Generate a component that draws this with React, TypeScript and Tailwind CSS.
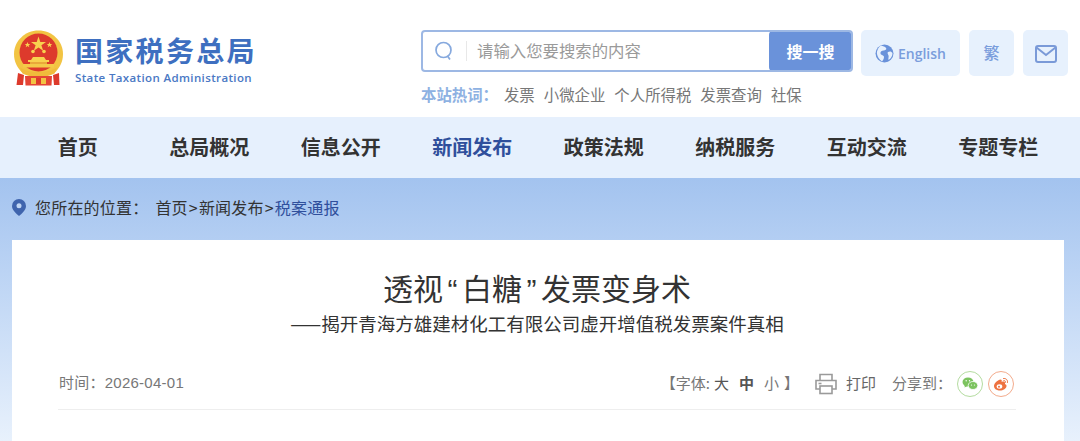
const CJK = "font-['Noto_Sans_CJK_SC','Noto_Sans',sans-serif]";
const LATIN = "font-['Liberation_Sans','Noto_Sans_CJK_SC',sans-serif]";

const HOT_WORDS = ["发票", "小微企业", "个人所得税", "发票查询", "社保"];
const NAV = ["首页", "总局概况", "信息公开", "新闻发布", "政策法规", "纳税服务", "互动交流", "专题专栏"];

function Emblem() {
  return (
    <svg width="51" height="56" viewBox="0 0 51 56" className="shrink-0">
      <path d="M25.500 0.500C39 0.500 50 11 50 24c0 8-3.500 14-8 18.500H9C4.500 38 1 32 1 24 1 11 12 0.500 25.500 0.500z" fill="#f2c443" />
      <circle cx="25.500" cy="22.500" r="19" fill="#dd3a2c" />
      <polygon points="25.500,6.500 27.300,12 33,12 28.400,15.300 30.200,20.800 25.500,17.500 20.800,20.800 22.600,15.300 18,12 23.700,12" fill="#f8d24f" />
      <polygon points="14.500,12 15.300,14 17.300,14 15.700,15.300 16.300,17.300 14.500,16.100 12.700,17.300 13.300,15.300 11.700,14 13.700,14" fill="#f8d24f" />
      <polygon points="36.500,12 37.300,14 39.300,14 37.700,15.300 38.300,17.300 36.500,16.100 34.700,17.300 35.300,15.300 33.700,14 35.700,14" fill="#f8d24f" />
      <circle cx="20" cy="21.500" r="1.800" fill="#f8d24f" />
      <circle cx="31" cy="21.500" r="1.800" fill="#f8d24f" />
      <path d="M20 27h11l2 3h-15z" fill="#f8d24f" />
      <path d="M15 30h21v2H15z" fill="#f8d24f" />
      <path d="M10 34h31v3.500H10z" fill="#f4ca49" />
      <path d="M17 32h17v2H17z" fill="#e9a93a" />
      <path d="M7 37.500c5 3 11 4.500 18.500 4.500S39 40.500 44 37.500l-2.500 6c-4.500 2.500-10 3.500-16 3.500s-11.500-1-16-3.500z" fill="#f0bb3b" />
      <path d="M5 43l6 2-1 10H3.500zM46 43l-6 2 1 10h5.500z" fill="#dd3a2c" />
      <path d="M12 46h27l-.5 9.500h-26z" fill="#e54535" />
      <path d="M18 48h15v6H18z" fill="#f2c443" />
      <path d="M23 48h5v6h-5z" fill="#dd3a2c" />
    </svg>
  );
}

function GlobeIcon() {
  return (
    <svg width="19" height="19" viewBox="0 0 19 19" className="shrink-0">
      <circle cx="9.500" cy="9.500" r="9" fill="#6a92da" />
      <path d="M6 1.500c2 1 4 1 5 2.500s-1 2.500-2.500 2.500S5 7.500 5.500 9.500 9 11 9 13s-1 3-2 4.500C4 15 2.500 13 2 10S3.500 3 6 1.500zM13 8c2-1 3.500-.5 4.500 1 0 3-1.500 5.500-4 7-.5-2 .5-3 0-4.500S12 9 13 8z" fill="#e8f1fd" />
    </svg>
  );
}

function MailIcon() {
  return (
    <svg width="22" height="18" viewBox="0 0 22 18" fill="none" stroke="#7a9ad8" strokeWidth="2" className="shrink-0">
      <rect x="1" y="1" width="20" height="16" rx="2" />
      <path d="M1.500 2.500 11 10l9.500-7.500" />
    </svg>
  );
}

function PrintIcon() {
  return (
    <svg width="22" height="22" viewBox="0 0 22 22" fill="none" stroke="#9a9a9a" strokeWidth="1.600" className="shrink-0">
      <path d="M5 7V1.500h12V7" />
      <path d="M5 16H1V7.500h20V16h-4" />
      <rect x="5" y="13" width="12" height="7.500" />
      <path d="M3.500 10.500h3" />
    </svg>
  );
}

function WechatIcon() {
  return (
    <svg width="16" height="14" viewBox="0 0 16 14">
      <ellipse cx="6" cy="5" rx="5.500" ry="4.500" fill="#7cc35f" />
      <path d="M3 8 2.500 10.500 5.500 9z" fill="#7cc35f" />
      <ellipse cx="11" cy="8.500" rx="4.800" ry="4" fill="#7cc35f" stroke="#fff" strokeWidth="0.800" />
      <circle cx="4.200" cy="3.800" r="0.700" fill="#fff" />
      <circle cx="7.500" cy="3.800" r="0.700" fill="#fff" />
      <circle cx="9.500" cy="8" r="0.600" fill="#fff" />
      <circle cx="12.500" cy="8" r="0.600" fill="#fff" />
    </svg>
  );
}

function WeiboIcon() {
  return (
    <svg width="16" height="14" viewBox="0 0 16 14">
      <path d="M1 9c0-3 4-6 6.500-6.500 1.500 0 1.500 1.500 1 2.500 2-.7 3.500-.5 3.500 1 0 .5 0 1 0 1 1 .5 1.500 1 1.500 2 0 2.500-3.500 4.500-6.500 4.500S1 12 1 9z" fill="#ee7240" />
      <ellipse cx="6.500" cy="9.500" rx="2.800" ry="2.200" fill="#fff" />
      <circle cx="6" cy="9.700" r="1" fill="#ee7240" />
      <path d="M10.500 1.500c2.500-.5 4.500 1.500 4 4M10.800 3.500c1-.2 2 .7 1.800 1.800" fill="none" stroke="#ee7240" strokeWidth="1" strokeLinecap="round" />
    </svg>
  );
}

function Header() {
  return (
    <header className="flex h-[117px] bg-white pl-[13px] pr-3">
      <div className="flex w-[408px] shrink-0 items-start pt-[30px]">
        <Emblem />
        <div className="ml-[11px]">
          <div className="text-[28px] font-bold leading-[40px] tracking-[2.300px] whitespace-nowrap text-[#3e6fc0]">国家税务总局</div>
          <div className="font-['Open_Sans',sans-serif] text-[11.500px] font-semibold leading-[16px] tracking-[0.370px] whitespace-nowrap text-[#4a78c4]">State Taxation Administration</div>
        </div>
      </div>
      <div className="pt-[30px]">
        <div className="flex h-[42px] w-[432px] overflow-hidden rounded-[4px] border-2 border-[#9db8e4] bg-white">
          <div className="flex w-[43px] items-center pl-[11px]">
            <svg width="20" height="21" viewBox="0 0 20 21" fill="none" stroke="#86a9de" strokeWidth="1.700">
              <circle cx="9.500" cy="9" r="7.500" />
              <path d="M13.500 15l2.500 3.500" />
            </svg>
          </div>
          <div className="my-[9px] w-px bg-[#e8e8e8]" />
          <div className="flex-1 pl-[10px] text-[16.400px] leading-[37px] text-[#9a9a9a]">请输入您要搜索的内容</div>
          <div className="mt-[-1px] mb-[-1px] mr-[-1px] flex w-[83px] items-center justify-center rounded-l-[4px] bg-[#6a92da] pb-[1px] text-[16px] font-bold text-white">搜一搜</div>
        </div>
        <div className="mt-[12px] flex items-center text-[15.400px] leading-[20px] text-[#777777]">
          <span className="font-bold text-[#8eb1e2]">本站热词：</span>
          <span className="ml-[6px] flex gap-[9px]">
            {HOT_WORDS.map((word) => (
              <span key={word}>{word}</span>
            ))}
          </span>
        </div>
      </div>
      <div className="ml-[8px] flex gap-[9px] pt-[30px]">
        <div className="flex h-[46px] w-[99px] items-center justify-center gap-[4px] rounded-[5px] bg-[#e7f1fd]">
          <GlobeIcon />
          <span className="font-['Open_Sans',sans-serif] text-[14px] font-semibold text-[#7a9ddc]">English</span>
        </div>
        <div className="flex h-[46px] w-[45px] items-center justify-center rounded-[5px] bg-[#e7f1fd] pb-[2px] text-[16px] font-medium text-[#7a9ddc]">繁</div>
        <div className="flex h-[46px] w-[45px] items-center justify-center rounded-[5px] bg-[#e7f1fd] pt-[1px]">
          <MailIcon />
        </div>
      </div>
    </header>
  );
}

function NavBar() {
  return (
    <nav className="grid h-[61px] grid-cols-8 items-center bg-[#e6f0fd] pl-[12px] pr-[16px] pb-[1px] text-[20px] font-bold text-[#333333]">
      {NAV.map((item, i) => (
        <span key={item} className={i === 3 ? "text-center text-[#2f4f9c]" : "text-center"}>
          {item}
        </span>
      ))}
    </nav>
  );
}

function Crumbs() {
  return (
    <div className="flex h-[62px] items-center pl-[12px] pb-[4px] text-[16px] tracking-[0.200px] text-[#333333]">
      <svg width="14" height="17" viewBox="0 0 14 17" className="shrink-0">
        <path d="M7 0a7 7 0 0 1 7 7c0 4-4 7.500-7 10C4 14.500 0 11 0 7a7 7 0 0 1 7-7z" fill="#3f64ad" />
        <circle cx="7" cy="6.800" r="2.500" fill="#c0d5f3" />
      </svg>
      <span className="ml-[9px]">您所在的位置：</span>
      <span className="ml-[7px]">首页<span className="mx-[1px]">&gt;</span>新闻发布<span className="mx-[1px]">&gt;</span></span>
      <span className="text-[#2f4f9c]">税案通报</span>
    </div>
  );
}

function Article() {
  return (
    <main className="ml-[12px] mr-[16px] h-[201px] bg-white pl-[46px] pr-[48px]">
      <h1 className={`${LATIN} pt-[28px] text-center text-[30px] font-normal leading-[44px] text-[#333333]`}>透视<span className="mx-[4.500px]">“</span>白糖<span className="mx-[4.500px]">”</span>发票变身术</h1>
      <h2 className="mt-[-2px] text-center text-[18.500px] font-normal leading-[26px] text-[#333333]">——揭开青海方雄建材化工有限公司虚开增值税发票案件真相</h2>
      <div className="mt-[22px] flex h-[52px] items-center border-b border-[#eeeeee] text-[15px] text-[#777777]">
        <span className={`${LATIN} ml-[1px] tracking-[0.250px]`}>时间：2026-04-01</span>
        <div className="ml-auto flex items-center pr-[2px]">
          <span>【字体:</span>
          <span className="ml-[4px] text-[#555555]">大</span>
          <span className="ml-[10px] font-bold text-[#555555]">中</span>
          <span className="ml-[10px]">小</span>
          <span className="ml-[5px]">】</span>
          <span className="ml-[16px]"><PrintIcon /></span>
          <span className="ml-[9px] text-[#666666]">打印</span>
          <span className="ml-[16px]">分享到：</span>
          <span className="ml-[5px] flex h-[26px] w-[26px] items-center justify-center rounded-full border border-[#b4dca0]"><WechatIcon /></span>
          <span className="ml-[5px] flex h-[26px] w-[26px] items-center justify-center rounded-full border border-[#f3ab8c]"><WeiboIcon /></span>
        </div>
      </div>
    </main>
  );
}

export default function App() {
  return (
    <div className={`${CJK} h-[441px] w-[1080px] overflow-hidden bg-white`}>
      <Header />
      <NavBar />
      <div className="h-[263px] bg-gradient-to-b from-[#a3c3ef] to-[#e8f1fc]">
        <Crumbs />
        <Article />
      </div>
    </div>
  );
}
